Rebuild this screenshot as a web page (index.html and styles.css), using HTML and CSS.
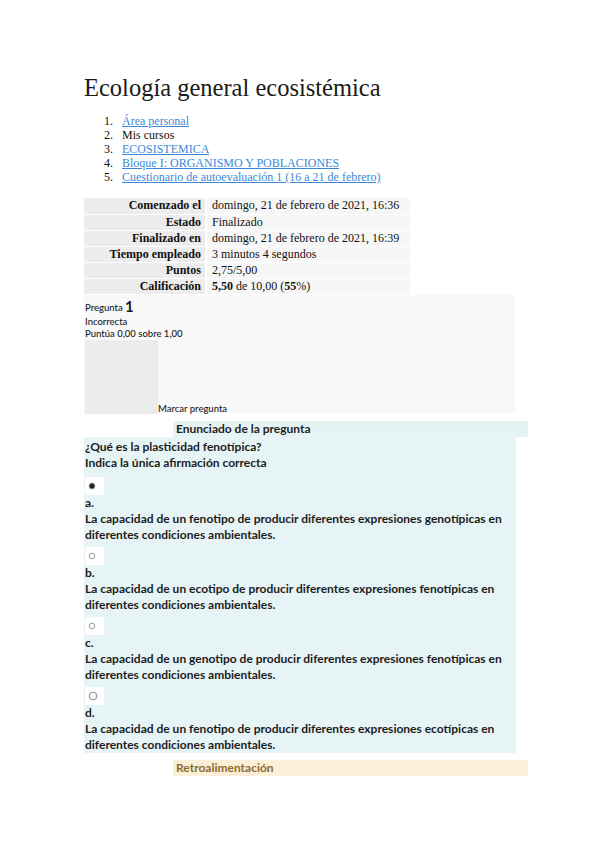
FILE: index.html
```html
<!DOCTYPE html>
<html lang="es">
<head>
<meta charset="utf-8">
<title>Ecología general ecosistémica</title>
<link rel="stylesheet" href="styles.css">
</head>
<body>
<div class="page">
  <h1 class="title">Ecología general ecosistémica</h1>
  <ol class="crumbs">
    <li><a href="#">Área personal</a></li>
    <li>Mis cursos</li>
    <li><a href="#">ECOSISTEMICA</a></li>
    <li><a href="#">Bloque I: ORGANISMO Y POBLACIONES</a></li>
    <li><a href="#">Cuestionario de autoevaluación 1 (16 a 21 de febrero)</a></li>
  </ol>
  <table class="summary">
    <tr><th>Comenzado el</th><td>domingo, 21 de febrero de 2021, 16:36</td></tr>
    <tr><th>Estado</th><td>Finalizado</td></tr>
    <tr><th>Finalizado en</th><td>domingo, 21 de febrero de 2021, 16:39</td></tr>
    <tr><th>Tiempo empleado</th><td>3 minutos 4 segundos</td></tr>
    <tr><th>Puntos</th><td>2,75/5,00</td></tr>
    <tr><th>Calificación</th><td><b>5,50</b> de 10,00 (<b>55</b>%)</td></tr>
  </table>

  <div class="info">
    <div class="info-line first">Pregunta <span class="qno">1</span></div>
    <div class="info-line">Incorrecta</div>
    <div class="info-line third">Puntúa 0,00 sobre 1,00</div>
    <div class="flag-row">
      <div class="flag-box"></div>
      <span class="flag-label">Marcar pregunta</span>
    </div>
  </div>

  <div class="strip strip-q">Enunciado de la pregunta</div>
  <div class="content">
    <div class="qtext">¿Qué es la plasticidad fenotípica?</div>
    <div class="qtext last">Indica la única afirmación correcta</div>

    <div class="option">
      <div class="radio-box"><svg width="8" height="8" viewBox="0 0 8 8"><circle cx="4" cy="4" r="3" fill="#222" stroke="#999" stroke-width="1"/></svg></div>
      <div class="opt-line">a.</div>
      <div class="opt-line">La capacidad de un fenotipo de producir diferentes expresiones genotípicas en diferentes condiciones ambientales.</div>
    </div>
    <div class="option">
      <div class="radio-box"><svg width="8" height="8" viewBox="0 0 8 8"><circle cx="4" cy="4" r="2.8" fill="none" stroke="#9a9a9a" stroke-width="1"/></svg></div>
      <div class="opt-line">b.</div>
      <div class="opt-line">La capacidad de un ecotipo de producir diferentes expresiones fenotípicas en diferentes condiciones ambientales.</div>
    </div>
    <div class="option">
      <div class="radio-box"><svg width="8" height="8" viewBox="0 0 8 8"><circle cx="4" cy="4" r="2.8" fill="none" stroke="#9a9a9a" stroke-width="1"/></svg></div>
      <div class="opt-line">c.</div>
      <div class="opt-line">La capacidad de un genotipo de producir diferentes expresiones fenotípicas en diferentes condiciones ambientales.</div>
    </div>
    <div class="option">
      <div class="radio-box"><svg width="10" height="10" viewBox="0 0 10 10"><circle cx="5" cy="5" r="3.8" fill="none" stroke="#8a8a8a" stroke-width="1"/></svg></div>
      <div class="opt-line">d.</div>
      <div class="opt-line">La capacidad de un fenotipo de producir diferentes expresiones ecotípicas en diferentes condiciones ambientales.</div>
    </div>
  </div>
  <div class="strip strip-f">Retroalimentación</div>
</div>
</body>
</html>
```

FILE: styles.css
```css
html, body {
  margin: 0;
  padding: 0;
  background: #ffffff;
}

body {
  font-family: "Liberation Serif", "Times New Roman", serif;
  color: #111;
}

.page {
  padding-left: 84px;
  width: 450px;
}

.title {
  margin: 73px 0 0;
  font-size: 24.5px;
  line-height: 30px;
  font-weight: normal;
  color: #1a1a1a;
}

.crumbs {
  margin: 11px 0 0;
  padding-left: 0;
  list-style: none;
  counter-reset: crumb;
  font-size: 12px;
  line-height: 14px;
}

.crumbs li {
  counter-increment: crumb;
  display: flex;
}

.crumbs li::before {
  content: counter(crumb) ".";
  width: 38px;
  padding-right: 9px;
  text-align: right;
  box-sizing: border-box;
  flex: none;
}

.crumbs a {
  color: #3c88d8;
  text-decoration: underline;
}

.summary {
  margin-top: 14px;
  border-collapse: collapse;
  font-size: 12px;
  width: 326px;
  white-space: nowrap;
}

.summary th,
.summary td {
  height: 16px;
  padding: 0 4px;
  line-height: 15px;
  border-bottom: 1px solid #ffffff;
  box-sizing: border-box;
}

.summary th {
  text-align: right;
  background: #ececec;
  width: 122px;
  padding-right: 4px;
  border-right: 2px solid #ffffff;
}

.summary td {
  background: #f6f6f6;
  padding-left: 5px;
}

.info {
  margin-top: 0;
  width: 431px;
  height: 118px;
  background: #f8f8f8;
  font-family: "Lato", "Noto Sans", sans-serif;
  font-size: 9.5px;
  font-weight: 500;
  color: #1b1b1b;
  display: flex;
  flex-direction: column;
}

.info-line {
  line-height: 13px;
  padding-left: 1px;
}

.info-line.first {
  margin-top: 4px;
  line-height: 14px;
}

.info-line.third {
  line-height: 12px;
}

.qno {
  font-size: 15px;
  font-weight: bold;
  vertical-align: -1px;
}

.flag-row {
  display: flex;
  align-items: flex-end;
}

.flag-box {
  width: 73px;
  height: 74px;
  margin-left: 1px;
  background: #ececec;
}

.flag-label {
  line-height: 11px;
}

.strip {
  margin-left: 89px;
  width: 352px;
  height: 16px;
  padding-left: 3px;
  font-family: "Lato", "Noto Sans", sans-serif;
  font-size: 12px;
  font-weight: bold;
  line-height: 16px;
}

.strip-q {
  margin-top: 8px;
  background: #e6f3f5;
  color: #1e1e1e;
}

.strip-f {
  margin-top: 7px;
  background: #fcefd8;
  color: #8a6a2c;
}

.content {
  width: 432px;
  padding: 2px 0 0 1px;
  background: #e7f4f6;
  font-family: "Lato", "Noto Sans", sans-serif;
  font-size: 12px;
  font-weight: bold;
  color: #1c1c1c;
  box-sizing: border-box;
}

.qtext {
  line-height: 16px;
}

.qtext.last {
  margin-bottom: 2px;
}

.option {
  padding-top: 4px;
}

.radio-box {
  width: 19px;
  height: 18px;
  background: #ffffff;
  display: flex;
  align-items: center;
  padding-left: 3px;
  box-sizing: border-box;
}

.opt-line {
  line-height: 16px;
}
```
